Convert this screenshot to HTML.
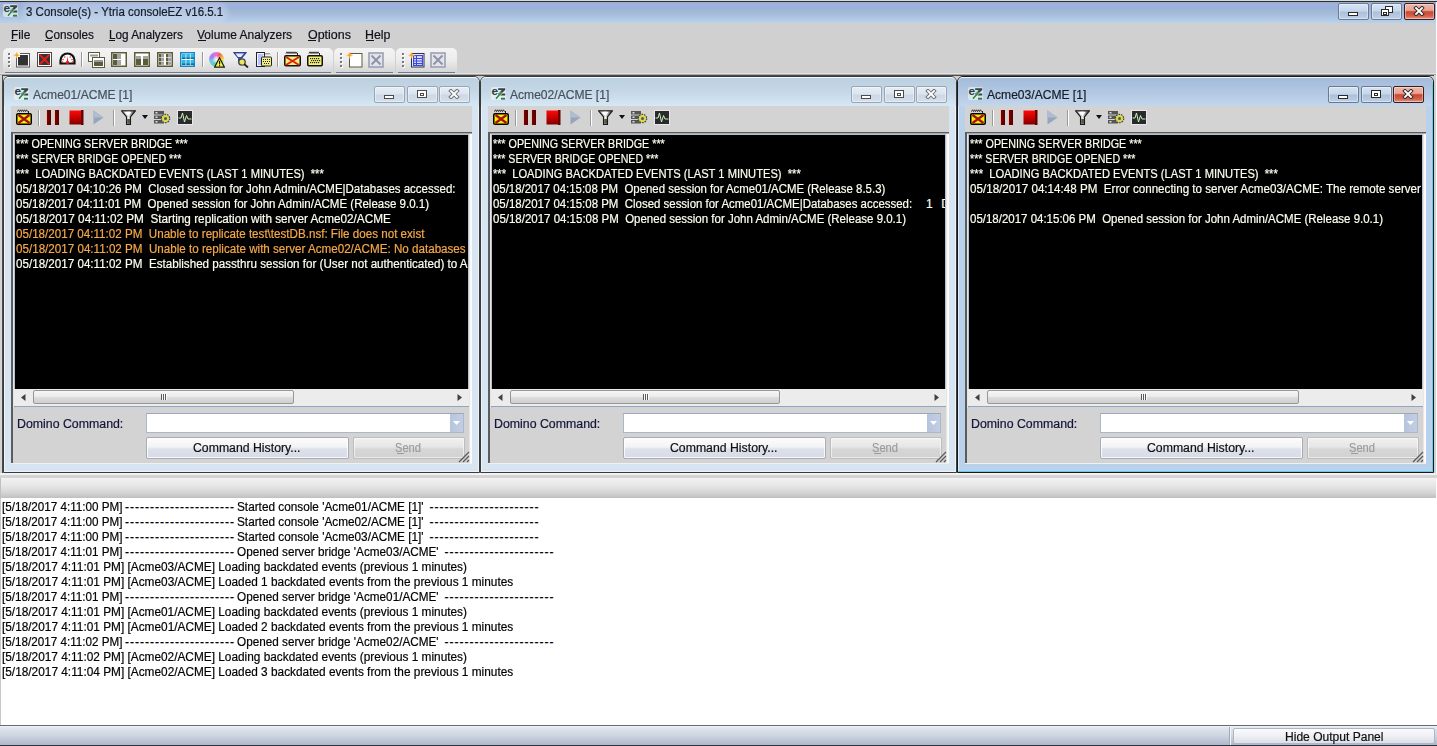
<!DOCTYPE html>
<html><head><meta charset="utf-8"><title>consoleEZ</title><style>
*{margin:0;padding:0;box-sizing:border-box}
html,body{width:1437px;height:746px;overflow:hidden;background:#d0d0d0;font-family:"Liberation Sans",sans-serif;font-size:12px;position:relative}
.a{position:absolute;display:block}
.t{position:absolute;white-space:pre;transform-origin:0 0;-webkit-text-stroke:0.2px currentColor}
</style></head><body>
<div class="a" style="left:0px;top:0px;width:1437px;height:1px;background:#d8dcd8"></div>
<div class="a" style="left:0px;top:1px;width:1437px;height:1px;background:#283038"></div>
<div class="a" style="left:0px;top:2px;width:1437px;height:21px;background:linear-gradient(#9aa8c8 0px,#a2b2de 2px,#9ab2da 6px,#a2bad4 10px,#abc0e0 14px,#b2cbe8 18px,#b8d2ec 21px)"></div>
<div class="a" style="left:22px;top:3px;width:206px;height:19px;background:rgba(235,242,250,.28);border-radius:9px;filter:blur(2.5px)"></div>
<svg class="a" style="left:3px;top:4px;" width="15" height="13" viewBox="0 0 15 13"><rect x="0" y="0" width="15" height="13" rx="2" fill="#f4f8fa" opacity=".55"/>
<text x="0.5" y="8.2" font-family="Liberation Sans" font-weight="bold" font-size="10" fill="#2e3c3c" textLength="6.6" lengthAdjust="spacingAndGlyphs">e</text>
<path d="M7.2 1.2H14.2V3.1L10.4 6.5H14.2V8.4H7V6.5L10.8 3.1H7.2z" fill="#364545"/>
<path d="M5 11.8l5.5-6.5" stroke="#fff" stroke-width="3" opacity=".6"/>
<path d="M5 11.8l5.5-6.5" stroke="#2e8a3c" stroke-width="1.7"/>
<rect x="10" y="10.8" width="4" height="1.8" fill="#2a7a3a"/></svg>
<div class="t" style="left:25.5px;top:5.0px;font-size:12px;line-height:15px;color:#141c2c;transform:scaleX(0.9579);">3 Console(s) - Ytria consoleEZ v16.5.1</div>
<div class="a" style="left:1338px;top:3px;width:31px;height:17px;background:linear-gradient(#d6e3f2 0%,#c6d7ec 45%,#acc0da 55%,#bed1e8 100%);border:1px solid #6a7a90;border-radius:2px;box-shadow:inset 0 0 0 1px rgba(255,255,255,.4)"></div>
<div class="a" style="left:1348px;top:12px;width:10px;height:4px;background:#fff;border:1px solid #2a2a2a"></div>
<div class="a" style="left:1371px;top:3px;width:31px;height:17px;background:linear-gradient(#d6e3f2 0%,#c6d7ec 45%,#acc0da 55%,#bed1e8 100%);border:1px solid #6a7a90;border-radius:2px;box-shadow:inset 0 0 0 1px rgba(255,255,255,.4)"></div>
<div class="a" style="left:1385px;top:6px;width:8px;height:7px;background:#fff;border:1px solid #2a2a2a"></div>
<div class="a" style="left:1381px;top:9px;width:8px;height:7px;background:#fff;border:1px solid #2a2a2a"></div>
<div class="a" style="left:1383px;top:12px;width:4px;height:3px;background:#fff;border:1px solid #2a2a2a"></div>
<div class="a" style="left:1404px;top:3px;width:31px;height:17px;background:linear-gradient(#efb6aa 0%,#e8a494 42%,#cc4630 52%,#d4604a 80%,#e6988a 100%);border:1px solid #3c1c18;border-radius:2px;box-shadow:inset 0 0 0 1px rgba(255,255,255,.4)"></div>
<svg class="a" style="left:1413px;top:6px;" width="12" height="10" viewBox="0 0 12 10"><path d="M3 2l6 6M9 2l-6 6" stroke="#2a2a2a" stroke-width="3.8" stroke-linecap="square"/><path d="M3 2l6 6M9 2l-6 6" stroke="#fff" stroke-width="1.9" stroke-linecap="square"/></svg>
<div class="a" style="left:0px;top:23px;width:1437px;height:25px;background:#d0d0d0"></div>
<div class="t" style="left:10.8px;top:28.3px;font-size:12px;line-height:15px;color:#10101c;transform:scaleX(0.9977);">File</div>
<div class="a" style="left:11px;top:40px;width:6px;height:1px;background:#10101c"></div>
<div class="t" style="left:44.9px;top:28.3px;font-size:12px;line-height:15px;color:#10101c;transform:scaleX(0.9794);">Consoles</div>
<div class="a" style="left:45px;top:40px;width:7px;height:1px;background:#10101c"></div>
<div class="t" style="left:109.0px;top:28.3px;font-size:12px;line-height:15px;color:#10101c;transform:scaleX(0.9802);">Log Analyzers</div>
<div class="a" style="left:109px;top:40px;width:6px;height:1px;background:#10101c"></div>
<div class="t" style="left:197.4px;top:28.3px;font-size:12px;line-height:15px;color:#10101c;transform:scaleX(0.9970);">Volume Analyzers</div>
<div class="a" style="left:198px;top:40px;width:8px;height:1px;background:#10101c"></div>
<div class="t" style="left:307.7px;top:28.3px;font-size:12px;line-height:15px;color:#10101c;transform:scaleX(1.0372);">Options</div>
<div class="a" style="left:308px;top:40px;width:8px;height:1px;background:#10101c"></div>
<div class="t" style="left:365.4px;top:28.3px;font-size:12px;line-height:15px;color:#10101c;transform:scaleX(1.0329);">Help</div>
<div class="a" style="left:366px;top:40px;width:8px;height:1px;background:#10101c"></div>
<div class="a" style="left:3px;top:48px;width:330px;height:24px;background:linear-gradient(#f4f4f4 0%,#ececec 50%,#d6d6d6 100%);border-radius:5px 5px 0 0"></div>
<div class="a" style="left:5px;top:72px;width:326px;height:1px;background:#6a7b95"></div>
<div class="a" style="left:334px;top:48px;width:61px;height:24px;background:linear-gradient(#f4f4f4 0%,#ececec 50%,#d6d6d6 100%);border-radius:5px 5px 0 0"></div>
<div class="a" style="left:336px;top:72px;width:57px;height:1px;background:#6a7b95"></div>
<div class="a" style="left:396px;top:48px;width:61px;height:24px;background:linear-gradient(#f4f4f4 0%,#ececec 50%,#d6d6d6 100%);border-radius:5px 5px 0 0"></div>
<div class="a" style="left:398px;top:72px;width:57px;height:1px;background:#6a7b95"></div>
<div class="a" style="left:0px;top:73px;width:1437px;height:1px;background:#e2e2e2"></div>
<div class="a" style="left:8px;top:53px;width:2px;height:2px;background:#7a7a7a;box-shadow:1px 1px 0 #fff"></div>
<div class="a" style="left:8px;top:57px;width:2px;height:2px;background:#7a7a7a;box-shadow:1px 1px 0 #fff"></div>
<div class="a" style="left:8px;top:61px;width:2px;height:2px;background:#7a7a7a;box-shadow:1px 1px 0 #fff"></div>
<div class="a" style="left:8px;top:65px;width:2px;height:2px;background:#7a7a7a;box-shadow:1px 1px 0 #fff"></div>
<div class="a" style="left:340px;top:53px;width:2px;height:2px;background:#7a7a7a;box-shadow:1px 1px 0 #fff"></div>
<div class="a" style="left:340px;top:57px;width:2px;height:2px;background:#7a7a7a;box-shadow:1px 1px 0 #fff"></div>
<div class="a" style="left:340px;top:61px;width:2px;height:2px;background:#7a7a7a;box-shadow:1px 1px 0 #fff"></div>
<div class="a" style="left:340px;top:65px;width:2px;height:2px;background:#7a7a7a;box-shadow:1px 1px 0 #fff"></div>
<div class="a" style="left:402px;top:53px;width:2px;height:2px;background:#7a7a7a;box-shadow:1px 1px 0 #fff"></div>
<div class="a" style="left:402px;top:57px;width:2px;height:2px;background:#7a7a7a;box-shadow:1px 1px 0 #fff"></div>
<div class="a" style="left:402px;top:61px;width:2px;height:2px;background:#7a7a7a;box-shadow:1px 1px 0 #fff"></div>
<div class="a" style="left:402px;top:65px;width:2px;height:2px;background:#7a7a7a;box-shadow:1px 1px 0 #fff"></div>
<svg class="a" style="left:13px;top:51px;" width="18" height="17" viewBox="0 0 18 17"><rect x="3.5" y="2.5" width="13" height="13.5" fill="#fff" stroke="#5a5a5a"/><rect x="5" y="4" width="10" height="10.5" fill="#333"/><rect x="3" y="2" width="4" height="4" fill="#fff"/><path d="M3.8 1.0L4.7 3.3000000000000003L7.0 4.2L4.7 5.1000000000000005L3.8 7.4L2.9 5.1000000000000005L0.5999999999999996 4.2L2.9 3.3000000000000003z" fill="#f7a01a" stroke="#ffd070" stroke-width=".4"/></svg>
<svg class="a" style="left:37px;top:52px;" width="15" height="15" viewBox="0 0 15 15"><rect x=".5" y=".5" width="14" height="14" fill="#fff" stroke="#4a4a4a"/><rect x="2" y="2" width="11" height="11" fill="#333"/><path d="M2.5 2.5l10 10M12.5 2.5l-10 10" stroke="#e41c1c" stroke-width="1.8"/></svg>
<svg class="a" style="left:59px;top:52px;" width="17" height="13" viewBox="0 0 17 13"><path d="M1.5 11.5V8.5A7 7 0 0 1 15.5 8.5V11.5z" fill="#fff" stroke="#111" stroke-width="2.2"/><path d="M7.6 11L8.5 4L9.4 11z" fill="#e01818"/><circle cx="8.5" cy="10.4" r="1.6" fill="#e01818"/><circle cx="4" cy="7.5" r=".75" fill="#d22"/><circle cx="5.8" cy="5" r=".75" fill="#d22"/><circle cx="11.2" cy="5" r=".75" fill="#d22"/><circle cx="13" cy="7.5" r=".75" fill="#d22"/><circle cx="3.6" cy="10" r=".7" fill="#d22"/><circle cx="13.4" cy="10" r=".7" fill="#d22"/></svg>
<div class="a" style="left:81px;top:52px;width:1px;height:15px;background:#9a9a9a;box-shadow:1px 0 0 #fff"></div>
<svg class="a" style="left:88px;top:52px;" width="17" height="16" viewBox="0 0 17 16"><rect x=".5" y=".5" width="11" height="9" fill="#fff" stroke="#5c5c3a"/><rect x="2" y="2.5" width="8" height="2" fill="#9a9a9a"/><rect x="4.5" y="5.5" width="12" height="10" fill="#fff" stroke="#5c5c3a"/><rect x="6" y="8" width="9" height="2" fill="#9c9c9c"/><rect x="6" y="10" width="9" height="4" fill="#5c5c3a"/></svg>
<svg class="a" style="left:111px;top:52px;" width="16" height="15" viewBox="0 0 16 15"><rect x=".75" y=".75" width="14.5" height="13.5" fill="#fff" stroke="#5c5c3a" stroke-width="1.5"/><rect x="2" y="2" width="4.5" height="5" fill="#5c5c3a"/><rect x="6.5" y="2" width="3.5" height="5" fill="#a4a4a4"/><rect x="2" y="8" width="4.5" height="5" fill="#5c5c3a"/><rect x="6.5" y="8" width="3.5" height="5" fill="#a4a4a4"/></svg>
<svg class="a" style="left:134px;top:52px;" width="16" height="15" viewBox="0 0 16 15"><rect x=".75" y=".75" width="14.5" height="13.5" fill="#fff" stroke="#5c5c3a" stroke-width="1.5"/><rect x="2" y="4" width="5" height="3" fill="#a4a4a4"/><rect x="2" y="7" width="5" height="6" fill="#5c5c3a"/><rect x="9" y="4" width="5" height="3" fill="#a4a4a4"/><rect x="9" y="7" width="5" height="6" fill="#5c5c3a"/></svg>
<svg class="a" style="left:157px;top:52px;" width="16" height="15" viewBox="0 0 16 15"><rect x=".75" y=".75" width="14.5" height="13.5" fill="#fff" stroke="#5c5c3a" stroke-width="1.5"/><rect x="2" y="2" width="2.5" height="3.2" fill="#5c5c3a"/><rect x="4.5" y="2" width="2.5" height="3.2" fill="#a0a0a0"/><rect x="2" y="5.8" width="2.5" height="3.2" fill="#5c5c3a"/><rect x="4.5" y="5.8" width="2.5" height="3.2" fill="#a0a0a0"/><rect x="2" y="9.6" width="2.5" height="3.2" fill="#5c5c3a"/><rect x="4.5" y="9.6" width="2.5" height="3.2" fill="#a0a0a0"/><rect x="9" y="2" width="2.5" height="3.2" fill="#5c5c3a"/><rect x="11.5" y="2" width="2.5" height="3.2" fill="#a0a0a0"/><rect x="9" y="5.8" width="2.5" height="3.2" fill="#5c5c3a"/><rect x="11.5" y="5.8" width="2.5" height="3.2" fill="#a0a0a0"/><rect x="9" y="9.6" width="2.5" height="3.2" fill="#5c5c3a"/><rect x="11.5" y="9.6" width="2.5" height="3.2" fill="#a0a0a0"/></svg>
<svg class="a" style="left:180px;top:52px;" width="15" height="15" viewBox="0 0 15 15"><rect x=".75" y=".75" width="13.5" height="13.5" fill="#fff" stroke="#1a86c0" stroke-width="1.5"/><rect x="2" y="2" width="3.6" height="3.2" fill="#2ab8f0"/><rect x="2" y="5.2" width="3.6" height="1.8" fill="#0a70a0"/><rect x="2" y="8" width="3.6" height="3.2" fill="#2ab8f0"/><rect x="2" y="11.2" width="3.6" height="1.8" fill="#0a70a0"/><rect x="6.3" y="2" width="3.6" height="3.2" fill="#2ab8f0"/><rect x="6.3" y="5.2" width="3.6" height="1.8" fill="#0a70a0"/><rect x="6.3" y="8" width="3.6" height="3.2" fill="#2ab8f0"/><rect x="6.3" y="11.2" width="3.6" height="1.8" fill="#0a70a0"/><rect x="10.6" y="2" width="3.6" height="3.2" fill="#2ab8f0"/><rect x="10.6" y="5.2" width="3.6" height="1.8" fill="#0a70a0"/><rect x="10.6" y="8" width="3.6" height="3.2" fill="#2ab8f0"/><rect x="10.6" y="11.2" width="3.6" height="1.8" fill="#0a70a0"/></svg>
<div class="a" style="left:202px;top:52px;width:1px;height:15px;background:#9a9a9a;box-shadow:1px 0 0 #fff"></div>
<div class="a" style="left:209px;top:52px;width:15px;height:15px;border-radius:50%;background:conic-gradient(from 0deg,#f070d0,#f06060,#f0a040 60deg,#f0e060 90deg,#80e060 150deg,#60d0a0 200deg,#70c8f0 250deg,#a080f0 300deg,#f070d0)"></div>
<div class="a" style="left:213px;top:56px;width:7px;height:7px;border-radius:50%;background:radial-gradient(#ffffff,rgba(255,255,255,0))"></div>
<svg class="a" style="left:214px;top:57px;" width="11" height="11" viewBox="0 0 11 11"><path d="M5.5 .8L10.4 10.2H.6z" fill="#f4f040" stroke="#1a1a1a" stroke-width="1.2"/><rect x="5" y="3.8" width="1.1" height="3.6" fill="#111"/><rect x="5" y="8.2" width="1.1" height="1.1" fill="#111"/></svg>
<svg class="a" style="left:233px;top:52px;" width="16" height="16" viewBox="0 0 16 16"><path d="M.5 .5H13.5L8.5 6.5V9L5.5 11V6.5z" fill="#3a4ab8" stroke="#202a7a" stroke-width=".8"/><path d="M2.5 1.5H11L8 5H5z" fill="#e8ecff"/><circle cx="9" cy="10" r="3.2" fill="#e8e860" stroke="#444" stroke-width="1.3"/><path d="M11.3 12.3L15 15.5" stroke="#222" stroke-width="1.8"/></svg>
<svg class="a" style="left:256px;top:52px;" width="16" height="16" viewBox="0 0 16 16"><rect x=".5" y=".5" width="8" height="14" fill="#f2f2ff" stroke="#223" stroke-width="1"/><rect x="2" y="2" width="5" height="11" fill="#b8c0ff"/><path d="M8 2.3l1 -1l1 1l1 -1l1 1l1 -1l1 1" stroke="#333" stroke-width=".7" fill="none"/><rect x="5.5" y="5" width="10" height="9" rx="1" fill="#f0f080" stroke="#222"/><g fill="#222"><rect x="7" y="7" width="1" height="1"/><rect x="9" y="7" width="1" height="1"/><rect x="11" y="7" width="1" height="1"/><rect x="13" y="7" width="1" height="1"/><rect x="7" y="9" width="1" height="1"/><rect x="9" y="9" width="1" height="1"/><rect x="11" y="9" width="1" height="1"/><rect x="13" y="9" width="1" height="1"/><rect x="8" y="11" width="1" height="1"/><rect x="10" y="11" width="1" height="1"/><rect x="12" y="11" width="1" height="1"/></g></svg>
<div class="a" style="left:277px;top:52px;width:1px;height:15px;background:#9a9a9a;box-shadow:1px 0 0 #fff"></div>
<svg class="a" style="left:284px;top:51px;" width="17" height="16" viewBox="0 0 17 16"><polyline points="2,2.6 3,0.8 4,2.6 5,0.8 6,2.6 7,0.8 8,2.6 9,0.8 10,2.6 11,0.8 12,2.6 13,0.8" stroke="#222" stroke-width=".9" fill="none"/><rect x="13" y="2" width="1" height="3" fill="#222"/><rect x=".75" y="4.75" width="15.5" height="10" rx="1.2" fill="#f4f470" stroke="#111" stroke-width="1.5"/><path d="M2 6l13 8M15 6l-13 8" stroke="#e01c1c" stroke-width="2"/></svg>
<svg class="a" style="left:307px;top:51px;" width="16" height="16" viewBox="0 0 16 16"><polyline points="2,2.6 3,0.8 4,2.6 5,0.8 6,2.6 7,0.8 8,2.6 9,0.8 10,2.6 11,0.8 12,2.6" stroke="#222" stroke-width=".9" fill="none"/><rect x="12" y="2" width="1" height="3" fill="#222"/><rect x=".75" y="4.75" width="14.5" height="10" rx="1.2" fill="#f4f470" stroke="#111" stroke-width="1.5"/><g fill="#222"><rect x="3" y="7" width="1.2" height="1.2"/><rect x="5" y="7" width="1.2" height="1.2"/><rect x="7" y="7" width="1.2" height="1.2"/><rect x="9" y="7" width="1.2" height="1.2"/><rect x="11" y="7" width="1.2" height="1.2"/><rect x="4" y="9" width="1.2" height="1.2"/><rect x="6" y="9" width="1.2" height="1.2"/><rect x="8" y="9" width="1.2" height="1.2"/><rect x="10" y="9" width="1.2" height="1.2"/><rect x="12" y="9" width="1.2" height="1.2"/><rect x="3" y="11" width="1.2" height="1.2"/><rect x="5" y="11" width="1.2" height="1.2"/><rect x="7" y="11" width="1.2" height="1.2"/><rect x="9" y="11" width="1.2" height="1.2"/><rect x="11" y="11" width="1.2" height="1.2"/></g></svg>
<svg class="a" style="left:346px;top:51px;" width="17" height="17" viewBox="0 0 17 17"><rect x="3.5" y="2.5" width="12.5" height="13.5" fill="#fff" stroke="#5c5c3a"/><rect x="2" y="1" width="4" height="4" fill="none"/><path d="M3.6 1.0L4.5 3.3000000000000003L6.800000000000001 4.2L4.5 5.1000000000000005L3.6 7.4L2.7 5.1000000000000005L0.3999999999999999 4.2L2.7 3.3000000000000003z" fill="#f7a01a" stroke="#ffd070" stroke-width=".4"/></svg>
<svg class="a" style="left:368px;top:52px;" width="16" height="16" viewBox="0 0 16 16"><rect x="1" y="1" width="14" height="14" fill="#e4e4e8" stroke="#9aa0b4" stroke-width="1.6"/><path d="M3.5 3.5l9 9M12.5 3.5l-9 9" stroke="#8a90a8" stroke-width="1.8"/></svg>
<svg class="a" style="left:408px;top:51px;" width="17" height="17" viewBox="0 0 17 17"><rect x="3.5" y="2.5" width="12.5" height="13.5" fill="#fff" stroke="#333"/><rect x="5.5" y="4.5" width="9" height="10" fill="#dde" stroke="#3848e8" stroke-width="1.2"/><path d="M6 7.5h8M6 10h8M6 12.5h8M8.5 5v9" stroke="#3848e8" stroke-width="1"/><path d="M3.6 1.0L4.5 3.3000000000000003L6.800000000000001 4.2L4.5 5.1000000000000005L3.6 7.4L2.7 5.1000000000000005L0.3999999999999999 4.2L2.7 3.3000000000000003z" fill="#f7a01a" stroke="#ffd070" stroke-width=".4"/></svg>
<svg class="a" style="left:430px;top:52px;" width="16" height="16" viewBox="0 0 16 16"><rect x="1" y="1" width="14" height="14" fill="#e4e4e8" stroke="#9aa0b4" stroke-width="1.6"/><path d="M3.5 3.5l9 9M12.5 3.5l-9 9" stroke="#8a90a8" stroke-width="1.8"/></svg>
<div class="a" style="left:0px;top:74px;width:1437px;height:1px;background:#a8a8a8"></div>
<div class="a" style="left:0px;top:75px;width:1437px;height:1px;background:#4a4a4a"></div>
<div class="a" style="left:0px;top:75px;width:2px;height:400px;background:#d4d4d4"></div>
<div class="a" style="left:2px;top:75px;width:1px;height:400px;background:#4a4a4a"></div>
<div class="a" style="left:3px;top:76px;width:477px;height:397px;background:#d7e4f2;border:1px solid #3c3c3c;border-radius:6px 6px 0 0;box-shadow:inset 0 0 0 1px rgba(255,255,255,.55)"></div>
<div class="a" style="left:4px;top:77px;width:475px;height:29px;background:linear-gradient(#bbd0e0 0%,#c6d8e8 50%,#d6e7f5 100%);border-radius:5px 5px 0 0;border-top:1px solid rgba(255,255,255,.7)"></div>
<svg class="a" style="left:14px;top:87px;" width="15" height="13" viewBox="0 0 15 13"><rect x="0" y="0" width="15" height="13" rx="2" fill="#f4f8fa" opacity=".55"/>
<text x="0.5" y="8.2" font-family="Liberation Sans" font-weight="bold" font-size="10" fill="#2e3c3c" textLength="6.6" lengthAdjust="spacingAndGlyphs">e</text>
<path d="M7.2 1.2H14.2V3.1L10.4 6.5H14.2V8.4H7V6.5L10.8 3.1H7.2z" fill="#364545"/>
<path d="M5 11.8l5.5-6.5" stroke="#fff" stroke-width="3" opacity=".6"/>
<path d="M5 11.8l5.5-6.5" stroke="#2e8a3c" stroke-width="1.7"/>
<rect x="10" y="10.8" width="4" height="1.8" fill="#2a7a3a"/></svg>
<div class="t" style="left:32.5px;top:87.9px;font-size:12px;line-height:15px;color:#46505a;transform:scaleX(1.0060);">Acme01/ACME [1]</div>
<div class="a" style="left:374px;top:86px;width:31px;height:17px;background:linear-gradient(#e6edf4 0%,#dce5ef 45%,#ccd8e6 55%,#d6e0ec 100%);border:1px solid #9aa6b6;border-radius:2px;box-shadow:inset 0 0 0 1px rgba(255,255,255,.4)"></div>
<div class="a" style="left:384px;top:95px;width:10px;height:4px;background:#fff;border:1px solid #4a4a4a"></div>
<div class="a" style="left:407px;top:86px;width:31px;height:17px;background:linear-gradient(#e6edf4 0%,#dce5ef 45%,#ccd8e6 55%,#d6e0ec 100%);border:1px solid #9aa6b6;border-radius:2px;box-shadow:inset 0 0 0 1px rgba(255,255,255,.4)"></div>
<div class="a" style="left:417px;top:90px;width:10px;height:8px;background:#fff;border:1px solid #4a4a4a"></div>
<div class="a" style="left:420px;top:93px;width:4px;height:3px;background:#fff;border:1px solid #4a4a4a"></div>
<div class="a" style="left:439px;top:86px;width:31px;height:17px;background:linear-gradient(#e6edf4 0%,#dce5ef 45%,#ccd8e6 55%,#d6e0ec 100%);border:1px solid #9aa6b6;border-radius:2px;box-shadow:inset 0 0 0 1px rgba(255,255,255,.4)"></div>
<svg class="a" style="left:448px;top:89px;" width="12" height="10" viewBox="0 0 12 10"><path d="M3 2l6 6M9 2l-6 6" stroke="#6a6e74" stroke-width="3.8" stroke-linecap="square"/><path d="M3 2l6 6M9 2l-6 6" stroke="#fff" stroke-width="1.9" stroke-linecap="square"/></svg>
<div class="a" style="left:11px;top:106px;width:461px;height:357px;background:#d3d3d3"></div>
<div class="a" style="left:11px;top:416px;width:1px;height:43px;"></div>
<svg class="a" style="left:16px;top:109px;" width="16" height="16" viewBox="0 0 16 16"><polyline points="1.5,2.6 2.5,0.8 3.5,2.6 4.5,0.8 5.5,2.6 6.5,0.8 7.5,2.6 8.5,0.8 9.5,2.6 10.5,0.8 11.5,2.6" stroke="#222" stroke-width=".9" fill="none"/><rect x="12" y="2" width="1" height="3" fill="#222"/><rect x=".75" y="4.75" width="14.5" height="10.5" rx="1.3" fill="#f8f000" stroke="#000" stroke-width="1.5"/><g fill="#c8c000" opacity=".7"><rect x="3" y="7" width="1" height="1"/><rect x="12" y="7" width="1" height="1"/><rect x="3" y="12" width="1" height="1"/><rect x="12" y="12" width="1" height="1"/></g><path d="M2.5 6l11 8M13.5 6l-11 8" stroke="#a81010" stroke-width="2.2"/></svg>
<div class="a" style="left:38px;top:110px;width:1px;height:16px;background:#9a9a9a;box-shadow:1px 0 0 #fff"></div>
<svg class="a" style="left:46px;top:110px;" width="14" height="15" viewBox="0 0 14 15"><defs><linearGradient id="pz" x1="0" y1="0" x2="1" y2="0"><stop offset="0" stop-color="#ffb080"/><stop offset=".15" stop-color="#7a0000"/><stop offset="1" stop-color="#5a0000"/></linearGradient></defs><rect x=".5" y="0" width="4.5" height="15" fill="url(#pz)"/><rect x="8.5" y="0" width="4.5" height="15" fill="url(#pz)"/></svg>
<svg class="a" style="left:69px;top:110px;" width="15" height="15" viewBox="0 0 15 15"><defs><linearGradient id="st" x1="0" y1="0" x2="0" y2="1"><stop offset="0" stop-color="#ff0a0a"/><stop offset=".5" stop-color="#c80000"/><stop offset="1" stop-color="#800000"/></linearGradient></defs><rect x=".5" y=".5" width="13.5" height="14" fill="url(#st)"/><rect x="12" y="0" width="2.5" height="15" fill="#6a0000"/></svg>
<svg class="a" style="left:93px;top:110px;" width="11" height="15" viewBox="0 0 11 15"><path d="M.5 .5L10.5 7.5L.5 14.5z" fill="#97a4bc"/><path d="M.5 .5L10.5 7.5L.5 7.5z" fill="#b0bcd0"/></svg>
<div class="a" style="left:113px;top:110px;width:1px;height:16px;background:#9a9a9a;box-shadow:1px 0 0 #fff"></div>
<svg class="a" style="left:121px;top:110px;" width="15" height="15" viewBox="0 0 15 15"><defs><linearGradient id="fl" x1="0" y1="0" x2="1" y2="0"><stop offset="0" stop-color="#707070"/><stop offset=".5" stop-color="#e8e8e8"/><stop offset="1" stop-color="#202030"/></linearGradient></defs><path d="M.5 .8H14.5L9.5 6.8V14.5H5.5V6.8z" fill="url(#fl)" stroke="#1a1a1a" stroke-width="1.1"/><path d="M3.2 2H10.5L8.2 5H6z" fill="#fff"/><rect x="6.2" y="9" width="2.8" height="4.8" fill="#505a40"/></svg>
<svg class="a" style="left:142px;top:115px;" width="6" height="4" viewBox="0 0 6 4"><path d="M0 0H6L3 4z" fill="#111"/></svg>
<svg class="a" style="left:154px;top:110px;" width="17" height="15" viewBox="0 0 17 15"><rect x="0" y="1" width="10" height="3.5" fill="#555"/><rect x="0" y="5.5" width="10" height="3.5" fill="#555"/><rect x="0" y="10" width="10" height="3.5" fill="#555"/><rect x="1.5" y="2" width="2" height="1.5" fill="#ddd"/><rect x="1.5" y="6.5" width="2" height="1.5" fill="#ddd"/><rect x="1.5" y="11" width="2" height="1.5" fill="#ddd"/><circle cx="11.5" cy="8.5" r="4.2" fill="#d8d850" stroke="#444" stroke-width="1.2" stroke-dasharray="1.6 1"/><circle cx="11.5" cy="8.5" r="1.5" fill="#555"/></svg>
<svg class="a" style="left:177px;top:110px;" width="16" height="15" viewBox="0 0 16 15"><rect x=".5" y=".5" width="15" height="14" fill="#2a2a2a" stroke="#e8e8f4"/><path d="M1.5 8H4L5.5 3L7.5 12L9.5 5.5L11 9H14.5" stroke="#c8f0c0" stroke-width="1" fill="none"/></svg>
<div class="a" style="left:11px;top:132px;width:461px;height:1px;background:#5c5c5c"></div>
<div class="a" style="left:11px;top:133px;width:461px;height:1px;background:#a8a8a8"></div>
<div class="a" style="left:11px;top:132px;width:2px;height:331px;background:#5c5c5c"></div>
<div class="a" style="left:13px;top:134px;width:1px;height:274px;background:#e4e4e4"></div>
<div class="a" style="left:14px;top:135px;width:1px;height:273px;background:#b4c2d6"></div>
<div class="a" style="left:14px;top:134px;width:455px;height:1px;background:#b4c2d6"></div>
<div class="a" style="left:468px;top:135px;width:1px;height:255px;background:#b4c2d6"></div>
<div class="a" style="left:469px;top:134px;width:3px;height:329px;background:linear-gradient(90deg,#dcd8d8,#f8f8f8 40%,#fdfdfd)"></div>
<div class="a" style="left:11px;top:463px;width:461px;height:1px;background:#f0f0f0"></div>
<div class="a" style="left:15px;top:135px;width:453px;height:254px;background:#000;overflow:hidden">
<div class="t" style="left:1.0px;top:1.8px;font-size:12px;line-height:15px;color:#fffff0;transform:scaleX(0.8955);">*** OPENING SERVER BRIDGE ***</div>
<div class="t" style="left:1.0px;top:16.8px;font-size:12px;line-height:15px;color:#fffff0;transform:scaleX(0.8837);">*** SERVER BRIDGE OPENED ***</div>
<div class="t" style="left:1.0px;top:31.8px;font-size:12px;line-height:15px;color:#fffff0;transform:scaleX(0.9300);">***  LOADING BACKDATED EVENTS (LAST 1 MINUTES)  ***</div>
<div class="t" style="left:1.0px;top:46.8px;font-size:12px;line-height:15px;color:#fffff0;transform:scaleX(0.9581);">05/18/2017 04:10:26 PM  Closed session for John Admin/ACME|Databases accessed:</div>
<div class="t" style="left:1.0px;top:61.8px;font-size:12px;line-height:15px;color:#fffff0;transform:scaleX(0.9589);">05/18/2017 04:11:01 PM  Opened session for John Admin/ACME (Release 9.0.1)</div>
<div class="t" style="left:1.0px;top:76.8px;font-size:12px;line-height:15px;color:#fffff0;transform:scaleX(0.9795);">05/18/2017 04:11:02 PM  Starting replication with server Acme02/ACME</div>
<div class="t" style="left:1.0px;top:91.8px;font-size:12px;line-height:15px;color:#f6a848;transform:scaleX(0.9679);">05/18/2017 04:11:02 PM  Unable to replicate test\testDB.nsf: File does not exist</div>
<div class="t" style="left:1.0px;top:106.8px;font-size:12px;line-height:15px;color:#f6a848;transform:scaleX(0.9690);">05/18/2017 04:11:02 PM  Unable to replicate with server Acme02/ACME: No databases to replicate</div>
<div class="t" style="left:1.0px;top:121.8px;font-size:12px;line-height:15px;color:#fffff0;transform:scaleX(0.9690);">05/18/2017 04:11:02 PM  Established passthru session for (User not authenticated) to Acme02/ACME</div>
</div>
<div class="a" style="left:14px;top:389px;width:455px;height:18px;background:#ececec;border-bottom:1px solid #8ea6c6"></div>
<svg class="a" style="left:21px;top:394px;" width="5" height="7" viewBox="0 0 5 7"><path d="M4.5 0V7L0 3.5z" fill="#404040"/></svg>
<svg class="a" style="left:457px;top:394px;" width="5" height="7" viewBox="0 0 5 7"><path d="M.5 0V7L5 3.5z" fill="#404040"/></svg>
<div class="a" style="left:33px;top:390px;width:261px;height:14px;background:linear-gradient(#f6f6f6 0%,#ececec 45%,#dcdcdc 55%,#cfcfcf 100%);border:1px solid #979797;border-radius:2px"></div>
<div class="a" style="left:161px;top:394px;width:1px;height:6px;background:#5a5a5a;box-shadow:1px 0 0 #fafafa"></div>
<div class="a" style="left:163px;top:394px;width:1px;height:6px;background:#5a5a5a;box-shadow:1px 0 0 #fafafa"></div>
<div class="a" style="left:165px;top:394px;width:1px;height:6px;background:#5a5a5a;box-shadow:1px 0 0 #fafafa"></div>
<div class="t" style="left:17.4px;top:417.3px;font-size:12px;line-height:15px;color:#14143c;transform:scaleX(1.0283);">Domino Command:</div>
<div class="a" style="left:146px;top:413px;width:318px;height:20px;background:#fff;border:1px solid #abb8cc;border-top-color:#9aa8bc"></div>
<div class="a" style="left:450px;top:414px;width:13px;height:18px;background:linear-gradient(90deg,#b6c4dd,#c2cee4)"></div>
<svg class="a" style="left:453px;top:421px;" width="7" height="4" viewBox="0 0 7 4"><path d="M0 0H7L3.5 4z" fill="#fff"/></svg>
<div class="a" style="left:146px;top:437px;width:203px;height:22px;background:linear-gradient(#fdfdfe 0%,#f2f3f6 45%,#dde1ea 55%,#d6dbe6 100%);border:1px solid #a8acb4;border-radius:2px;box-shadow:inset 0 0 0 1px rgba(255,255,255,.8)"></div>
<div class="t" style="left:192.8px;top:441.1px;font-size:12px;line-height:15px;color:#101010;transform:scaleX(1.0224);">Command History...</div>
<div class="a" style="left:353px;top:437px;width:112px;height:22px;background:linear-gradient(#f0f0f0 0%,#e6e6e6 45%,#d6d6d6 55%,#d2d2d2 100%);border:1px solid #bdbdbd;border-radius:2px;box-shadow:inset 0 0 0 1px rgba(255,255,255,.55)"></div>
<div class="t" style="left:395.3px;top:441.1px;font-size:12px;line-height:15px;color:#9c9c9c;transform:scaleX(0.9275);">Send</div>
<div class="a" style="left:397px;top:453px;width:7px;height:1px;background:#9c9c9c"></div>
<svg class="a" style="left:457px;top:451px;" width="13" height="12" viewBox="0 0 13 12"><path d="M2 11L12 1M6 11L12 5M10 11L12 9" stroke="#5a5a5a" stroke-width="1.2"/></svg>
<div class="a" style="left:480px;top:76px;width:477px;height:397px;background:#d7e4f2;border:1px solid #3c3c3c;border-radius:6px 6px 0 0;box-shadow:inset 0 0 0 1px rgba(255,255,255,.55)"></div>
<div class="a" style="left:481px;top:77px;width:475px;height:29px;background:linear-gradient(#bbd0e0 0%,#c6d8e8 50%,#d6e7f5 100%);border-radius:5px 5px 0 0;border-top:1px solid rgba(255,255,255,.7)"></div>
<svg class="a" style="left:491px;top:87px;" width="15" height="13" viewBox="0 0 15 13"><rect x="0" y="0" width="15" height="13" rx="2" fill="#f4f8fa" opacity=".55"/>
<text x="0.5" y="8.2" font-family="Liberation Sans" font-weight="bold" font-size="10" fill="#2e3c3c" textLength="6.6" lengthAdjust="spacingAndGlyphs">e</text>
<path d="M7.2 1.2H14.2V3.1L10.4 6.5H14.2V8.4H7V6.5L10.8 3.1H7.2z" fill="#364545"/>
<path d="M5 11.8l5.5-6.5" stroke="#fff" stroke-width="3" opacity=".6"/>
<path d="M5 11.8l5.5-6.5" stroke="#2e8a3c" stroke-width="1.7"/>
<rect x="10" y="10.8" width="4" height="1.8" fill="#2a7a3a"/></svg>
<div class="t" style="left:509.5px;top:87.9px;font-size:12px;line-height:15px;color:#46505a;transform:scaleX(1.0060);">Acme02/ACME [1]</div>
<div class="a" style="left:851px;top:86px;width:31px;height:17px;background:linear-gradient(#e6edf4 0%,#dce5ef 45%,#ccd8e6 55%,#d6e0ec 100%);border:1px solid #9aa6b6;border-radius:2px;box-shadow:inset 0 0 0 1px rgba(255,255,255,.4)"></div>
<div class="a" style="left:861px;top:95px;width:10px;height:4px;background:#fff;border:1px solid #4a4a4a"></div>
<div class="a" style="left:884px;top:86px;width:31px;height:17px;background:linear-gradient(#e6edf4 0%,#dce5ef 45%,#ccd8e6 55%,#d6e0ec 100%);border:1px solid #9aa6b6;border-radius:2px;box-shadow:inset 0 0 0 1px rgba(255,255,255,.4)"></div>
<div class="a" style="left:894px;top:90px;width:10px;height:8px;background:#fff;border:1px solid #4a4a4a"></div>
<div class="a" style="left:897px;top:93px;width:4px;height:3px;background:#fff;border:1px solid #4a4a4a"></div>
<div class="a" style="left:916px;top:86px;width:31px;height:17px;background:linear-gradient(#e6edf4 0%,#dce5ef 45%,#ccd8e6 55%,#d6e0ec 100%);border:1px solid #9aa6b6;border-radius:2px;box-shadow:inset 0 0 0 1px rgba(255,255,255,.4)"></div>
<svg class="a" style="left:925px;top:89px;" width="12" height="10" viewBox="0 0 12 10"><path d="M3 2l6 6M9 2l-6 6" stroke="#6a6e74" stroke-width="3.8" stroke-linecap="square"/><path d="M3 2l6 6M9 2l-6 6" stroke="#fff" stroke-width="1.9" stroke-linecap="square"/></svg>
<div class="a" style="left:488px;top:106px;width:461px;height:357px;background:#d3d3d3"></div>
<div class="a" style="left:488px;top:416px;width:1px;height:43px;"></div>
<svg class="a" style="left:493px;top:109px;" width="16" height="16" viewBox="0 0 16 16"><polyline points="1.5,2.6 2.5,0.8 3.5,2.6 4.5,0.8 5.5,2.6 6.5,0.8 7.5,2.6 8.5,0.8 9.5,2.6 10.5,0.8 11.5,2.6" stroke="#222" stroke-width=".9" fill="none"/><rect x="12" y="2" width="1" height="3" fill="#222"/><rect x=".75" y="4.75" width="14.5" height="10.5" rx="1.3" fill="#f8f000" stroke="#000" stroke-width="1.5"/><g fill="#c8c000" opacity=".7"><rect x="3" y="7" width="1" height="1"/><rect x="12" y="7" width="1" height="1"/><rect x="3" y="12" width="1" height="1"/><rect x="12" y="12" width="1" height="1"/></g><path d="M2.5 6l11 8M13.5 6l-11 8" stroke="#a81010" stroke-width="2.2"/></svg>
<div class="a" style="left:515px;top:110px;width:1px;height:16px;background:#9a9a9a;box-shadow:1px 0 0 #fff"></div>
<svg class="a" style="left:523px;top:110px;" width="14" height="15" viewBox="0 0 14 15"><defs><linearGradient id="pz" x1="0" y1="0" x2="1" y2="0"><stop offset="0" stop-color="#ffb080"/><stop offset=".15" stop-color="#7a0000"/><stop offset="1" stop-color="#5a0000"/></linearGradient></defs><rect x=".5" y="0" width="4.5" height="15" fill="url(#pz)"/><rect x="8.5" y="0" width="4.5" height="15" fill="url(#pz)"/></svg>
<svg class="a" style="left:546px;top:110px;" width="15" height="15" viewBox="0 0 15 15"><defs><linearGradient id="st" x1="0" y1="0" x2="0" y2="1"><stop offset="0" stop-color="#ff0a0a"/><stop offset=".5" stop-color="#c80000"/><stop offset="1" stop-color="#800000"/></linearGradient></defs><rect x=".5" y=".5" width="13.5" height="14" fill="url(#st)"/><rect x="12" y="0" width="2.5" height="15" fill="#6a0000"/></svg>
<svg class="a" style="left:570px;top:110px;" width="11" height="15" viewBox="0 0 11 15"><path d="M.5 .5L10.5 7.5L.5 14.5z" fill="#97a4bc"/><path d="M.5 .5L10.5 7.5L.5 7.5z" fill="#b0bcd0"/></svg>
<div class="a" style="left:590px;top:110px;width:1px;height:16px;background:#9a9a9a;box-shadow:1px 0 0 #fff"></div>
<svg class="a" style="left:598px;top:110px;" width="15" height="15" viewBox="0 0 15 15"><defs><linearGradient id="fl" x1="0" y1="0" x2="1" y2="0"><stop offset="0" stop-color="#707070"/><stop offset=".5" stop-color="#e8e8e8"/><stop offset="1" stop-color="#202030"/></linearGradient></defs><path d="M.5 .8H14.5L9.5 6.8V14.5H5.5V6.8z" fill="url(#fl)" stroke="#1a1a1a" stroke-width="1.1"/><path d="M3.2 2H10.5L8.2 5H6z" fill="#fff"/><rect x="6.2" y="9" width="2.8" height="4.8" fill="#505a40"/></svg>
<svg class="a" style="left:619px;top:115px;" width="6" height="4" viewBox="0 0 6 4"><path d="M0 0H6L3 4z" fill="#111"/></svg>
<svg class="a" style="left:631px;top:110px;" width="17" height="15" viewBox="0 0 17 15"><rect x="0" y="1" width="10" height="3.5" fill="#555"/><rect x="0" y="5.5" width="10" height="3.5" fill="#555"/><rect x="0" y="10" width="10" height="3.5" fill="#555"/><rect x="1.5" y="2" width="2" height="1.5" fill="#ddd"/><rect x="1.5" y="6.5" width="2" height="1.5" fill="#ddd"/><rect x="1.5" y="11" width="2" height="1.5" fill="#ddd"/><circle cx="11.5" cy="8.5" r="4.2" fill="#d8d850" stroke="#444" stroke-width="1.2" stroke-dasharray="1.6 1"/><circle cx="11.5" cy="8.5" r="1.5" fill="#555"/></svg>
<svg class="a" style="left:654px;top:110px;" width="16" height="15" viewBox="0 0 16 15"><rect x=".5" y=".5" width="15" height="14" fill="#2a2a2a" stroke="#e8e8f4"/><path d="M1.5 8H4L5.5 3L7.5 12L9.5 5.5L11 9H14.5" stroke="#c8f0c0" stroke-width="1" fill="none"/></svg>
<div class="a" style="left:488px;top:132px;width:461px;height:1px;background:#5c5c5c"></div>
<div class="a" style="left:488px;top:133px;width:461px;height:1px;background:#a8a8a8"></div>
<div class="a" style="left:488px;top:132px;width:2px;height:331px;background:#5c5c5c"></div>
<div class="a" style="left:490px;top:134px;width:1px;height:274px;background:#e4e4e4"></div>
<div class="a" style="left:491px;top:135px;width:1px;height:273px;background:#b4c2d6"></div>
<div class="a" style="left:491px;top:134px;width:455px;height:1px;background:#b4c2d6"></div>
<div class="a" style="left:945px;top:135px;width:1px;height:255px;background:#b4c2d6"></div>
<div class="a" style="left:946px;top:134px;width:3px;height:329px;background:linear-gradient(90deg,#dcd8d8,#f8f8f8 40%,#fdfdfd)"></div>
<div class="a" style="left:488px;top:463px;width:461px;height:1px;background:#f0f0f0"></div>
<div class="a" style="left:492px;top:135px;width:453px;height:254px;background:#000;overflow:hidden">
<div class="t" style="left:1.0px;top:1.8px;font-size:12px;line-height:15px;color:#fffff0;transform:scaleX(0.8955);">*** OPENING SERVER BRIDGE ***</div>
<div class="t" style="left:1.0px;top:16.8px;font-size:12px;line-height:15px;color:#fffff0;transform:scaleX(0.8837);">*** SERVER BRIDGE OPENED ***</div>
<div class="t" style="left:1.0px;top:31.8px;font-size:12px;line-height:15px;color:#fffff0;transform:scaleX(0.9300);">***  LOADING BACKDATED EVENTS (LAST 1 MINUTES)  ***</div>
<div class="t" style="left:1.0px;top:46.8px;font-size:12px;line-height:15px;color:#fffff0;transform:scaleX(0.9516);">05/18/2017 04:15:08 PM  Opened session for Acme01/ACME (Release 8.5.3)</div>
<div class="t" style="left:1.0px;top:61.8px;font-size:12px;line-height:15px;color:#fffff0;transform:scaleX(0.9539);">05/18/2017 04:15:08 PM  Closed session for Acme01/ACME|Databases accessed:</div>
<div class="t" style="left:434.1px;top:61.8px;font-size:12px;line-height:15px;color:#fffff0;">1</div>
<div class="t" style="left:449.3px;top:61.8px;font-size:12px;line-height:15px;color:#fffff0;">Documents</div>
<div class="t" style="left:1.0px;top:76.8px;font-size:12px;line-height:15px;color:#fffff0;transform:scaleX(0.9569);">05/18/2017 04:15:08 PM  Opened session for John Admin/ACME (Release 9.0.1)</div>
</div>
<div class="a" style="left:491px;top:389px;width:455px;height:18px;background:#ececec;border-bottom:1px solid #8ea6c6"></div>
<svg class="a" style="left:498px;top:394px;" width="5" height="7" viewBox="0 0 5 7"><path d="M4.5 0V7L0 3.5z" fill="#404040"/></svg>
<svg class="a" style="left:934px;top:394px;" width="5" height="7" viewBox="0 0 5 7"><path d="M.5 0V7L5 3.5z" fill="#404040"/></svg>
<div class="a" style="left:510px;top:390px;width:270px;height:14px;background:linear-gradient(#f6f6f6 0%,#ececec 45%,#dcdcdc 55%,#cfcfcf 100%);border:1px solid #979797;border-radius:2px"></div>
<div class="a" style="left:643px;top:394px;width:1px;height:6px;background:#5a5a5a;box-shadow:1px 0 0 #fafafa"></div>
<div class="a" style="left:645px;top:394px;width:1px;height:6px;background:#5a5a5a;box-shadow:1px 0 0 #fafafa"></div>
<div class="a" style="left:647px;top:394px;width:1px;height:6px;background:#5a5a5a;box-shadow:1px 0 0 #fafafa"></div>
<div class="t" style="left:494.4px;top:417.3px;font-size:12px;line-height:15px;color:#14143c;transform:scaleX(1.0283);">Domino Command:</div>
<div class="a" style="left:623px;top:413px;width:318px;height:20px;background:#fff;border:1px solid #abb8cc;border-top-color:#9aa8bc"></div>
<div class="a" style="left:927px;top:414px;width:13px;height:18px;background:linear-gradient(90deg,#b6c4dd,#c2cee4)"></div>
<svg class="a" style="left:930px;top:421px;" width="7" height="4" viewBox="0 0 7 4"><path d="M0 0H7L3.5 4z" fill="#fff"/></svg>
<div class="a" style="left:623px;top:437px;width:203px;height:22px;background:linear-gradient(#fdfdfe 0%,#f2f3f6 45%,#dde1ea 55%,#d6dbe6 100%);border:1px solid #a8acb4;border-radius:2px;box-shadow:inset 0 0 0 1px rgba(255,255,255,.8)"></div>
<div class="t" style="left:669.8px;top:441.1px;font-size:12px;line-height:15px;color:#101010;transform:scaleX(1.0224);">Command History...</div>
<div class="a" style="left:830px;top:437px;width:112px;height:22px;background:linear-gradient(#f0f0f0 0%,#e6e6e6 45%,#d6d6d6 55%,#d2d2d2 100%);border:1px solid #bdbdbd;border-radius:2px;box-shadow:inset 0 0 0 1px rgba(255,255,255,.55)"></div>
<div class="t" style="left:872.3px;top:441.1px;font-size:12px;line-height:15px;color:#9c9c9c;transform:scaleX(0.9275);">Send</div>
<div class="a" style="left:874px;top:453px;width:7px;height:1px;background:#9c9c9c"></div>
<svg class="a" style="left:934px;top:451px;" width="13" height="12" viewBox="0 0 13 12"><path d="M2 11L12 1M6 11L12 5M10 11L12 9" stroke="#5a5a5a" stroke-width="1.2"/></svg>
<div class="a" style="left:957px;top:76px;width:477px;height:397px;background:#b9d1ea;border:1px solid #1a1a1a;border-radius:6px 6px 0 0;box-shadow:inset 0 0 0 1px rgba(255,255,255,.55)"></div>
<div class="a" style="left:958px;top:77px;width:475px;height:29px;background:linear-gradient(#a3bbdb 0%,#b2c8e2 50%,#c2d6ec 100%);border-radius:5px 5px 0 0;border-top:1px solid rgba(255,255,255,.7)"></div>
<div class="a" style="left:1432px;top:84px;width:1px;height:388px;background:#5ad0f0"></div>
<div class="a" style="left:958px;top:471px;width:475px;height:1px;background:#5ad0f0"></div>
<svg class="a" style="left:968px;top:87px;" width="15" height="13" viewBox="0 0 15 13"><rect x="0" y="0" width="15" height="13" rx="2" fill="#f4f8fa" opacity=".55"/>
<text x="0.5" y="8.2" font-family="Liberation Sans" font-weight="bold" font-size="10" fill="#2e3c3c" textLength="6.6" lengthAdjust="spacingAndGlyphs">e</text>
<path d="M7.2 1.2H14.2V3.1L10.4 6.5H14.2V8.4H7V6.5L10.8 3.1H7.2z" fill="#364545"/>
<path d="M5 11.8l5.5-6.5" stroke="#fff" stroke-width="3" opacity=".6"/>
<path d="M5 11.8l5.5-6.5" stroke="#2e8a3c" stroke-width="1.7"/>
<rect x="10" y="10.8" width="4" height="1.8" fill="#2a7a3a"/></svg>
<div class="t" style="left:986.5px;top:87.9px;font-size:12px;line-height:15px;color:#141c28;transform:scaleX(1.0060);">Acme03/ACME [1]</div>
<div class="a" style="left:1328px;top:86px;width:31px;height:17px;background:linear-gradient(#d6e3f2 0%,#c6d7ec 45%,#acc0da 55%,#bed1e8 100%);border:1px solid #6a7a90;border-radius:2px;box-shadow:inset 0 0 0 1px rgba(255,255,255,.4)"></div>
<div class="a" style="left:1338px;top:95px;width:10px;height:4px;background:#fff;border:1px solid #2a2a2a"></div>
<div class="a" style="left:1361px;top:86px;width:31px;height:17px;background:linear-gradient(#d6e3f2 0%,#c6d7ec 45%,#acc0da 55%,#bed1e8 100%);border:1px solid #6a7a90;border-radius:2px;box-shadow:inset 0 0 0 1px rgba(255,255,255,.4)"></div>
<div class="a" style="left:1371px;top:90px;width:10px;height:8px;background:#fff;border:1px solid #2a2a2a"></div>
<div class="a" style="left:1374px;top:93px;width:4px;height:3px;background:#fff;border:1px solid #2a2a2a"></div>
<div class="a" style="left:1393px;top:86px;width:31px;height:17px;background:linear-gradient(#efb6aa 0%,#e8a494 42%,#cc4630 52%,#d4604a 80%,#e6988a 100%);border:1px solid #3c1c18;border-radius:2px;box-shadow:inset 0 0 0 1px rgba(255,255,255,.4)"></div>
<svg class="a" style="left:1402px;top:89px;" width="12" height="10" viewBox="0 0 12 10"><path d="M3 2l6 6M9 2l-6 6" stroke="#2a2a2a" stroke-width="3.8" stroke-linecap="square"/><path d="M3 2l6 6M9 2l-6 6" stroke="#fff" stroke-width="1.9" stroke-linecap="square"/></svg>
<div class="a" style="left:965px;top:106px;width:461px;height:357px;background:#d3d3d3"></div>
<div class="a" style="left:965px;top:416px;width:1px;height:43px;"></div>
<svg class="a" style="left:970px;top:109px;" width="16" height="16" viewBox="0 0 16 16"><polyline points="1.5,2.6 2.5,0.8 3.5,2.6 4.5,0.8 5.5,2.6 6.5,0.8 7.5,2.6 8.5,0.8 9.5,2.6 10.5,0.8 11.5,2.6" stroke="#222" stroke-width=".9" fill="none"/><rect x="12" y="2" width="1" height="3" fill="#222"/><rect x=".75" y="4.75" width="14.5" height="10.5" rx="1.3" fill="#f8f000" stroke="#000" stroke-width="1.5"/><g fill="#c8c000" opacity=".7"><rect x="3" y="7" width="1" height="1"/><rect x="12" y="7" width="1" height="1"/><rect x="3" y="12" width="1" height="1"/><rect x="12" y="12" width="1" height="1"/></g><path d="M2.5 6l11 8M13.5 6l-11 8" stroke="#a81010" stroke-width="2.2"/></svg>
<div class="a" style="left:992px;top:110px;width:1px;height:16px;background:#9a9a9a;box-shadow:1px 0 0 #fff"></div>
<svg class="a" style="left:1000px;top:110px;" width="14" height="15" viewBox="0 0 14 15"><defs><linearGradient id="pz" x1="0" y1="0" x2="1" y2="0"><stop offset="0" stop-color="#ffb080"/><stop offset=".15" stop-color="#7a0000"/><stop offset="1" stop-color="#5a0000"/></linearGradient></defs><rect x=".5" y="0" width="4.5" height="15" fill="url(#pz)"/><rect x="8.5" y="0" width="4.5" height="15" fill="url(#pz)"/></svg>
<svg class="a" style="left:1023px;top:110px;" width="15" height="15" viewBox="0 0 15 15"><defs><linearGradient id="st" x1="0" y1="0" x2="0" y2="1"><stop offset="0" stop-color="#ff0a0a"/><stop offset=".5" stop-color="#c80000"/><stop offset="1" stop-color="#800000"/></linearGradient></defs><rect x=".5" y=".5" width="13.5" height="14" fill="url(#st)"/><rect x="12" y="0" width="2.5" height="15" fill="#6a0000"/></svg>
<svg class="a" style="left:1047px;top:110px;" width="11" height="15" viewBox="0 0 11 15"><path d="M.5 .5L10.5 7.5L.5 14.5z" fill="#97a4bc"/><path d="M.5 .5L10.5 7.5L.5 7.5z" fill="#b0bcd0"/></svg>
<div class="a" style="left:1067px;top:110px;width:1px;height:16px;background:#9a9a9a;box-shadow:1px 0 0 #fff"></div>
<svg class="a" style="left:1075px;top:110px;" width="15" height="15" viewBox="0 0 15 15"><defs><linearGradient id="fl" x1="0" y1="0" x2="1" y2="0"><stop offset="0" stop-color="#707070"/><stop offset=".5" stop-color="#e8e8e8"/><stop offset="1" stop-color="#202030"/></linearGradient></defs><path d="M.5 .8H14.5L9.5 6.8V14.5H5.5V6.8z" fill="url(#fl)" stroke="#1a1a1a" stroke-width="1.1"/><path d="M3.2 2H10.5L8.2 5H6z" fill="#fff"/><rect x="6.2" y="9" width="2.8" height="4.8" fill="#505a40"/></svg>
<svg class="a" style="left:1096px;top:115px;" width="6" height="4" viewBox="0 0 6 4"><path d="M0 0H6L3 4z" fill="#111"/></svg>
<svg class="a" style="left:1108px;top:110px;" width="17" height="15" viewBox="0 0 17 15"><rect x="0" y="1" width="10" height="3.5" fill="#555"/><rect x="0" y="5.5" width="10" height="3.5" fill="#555"/><rect x="0" y="10" width="10" height="3.5" fill="#555"/><rect x="1.5" y="2" width="2" height="1.5" fill="#ddd"/><rect x="1.5" y="6.5" width="2" height="1.5" fill="#ddd"/><rect x="1.5" y="11" width="2" height="1.5" fill="#ddd"/><circle cx="11.5" cy="8.5" r="4.2" fill="#d8d850" stroke="#444" stroke-width="1.2" stroke-dasharray="1.6 1"/><circle cx="11.5" cy="8.5" r="1.5" fill="#555"/></svg>
<svg class="a" style="left:1131px;top:110px;" width="16" height="15" viewBox="0 0 16 15"><rect x=".5" y=".5" width="15" height="14" fill="#2a2a2a" stroke="#e8e8f4"/><path d="M1.5 8H4L5.5 3L7.5 12L9.5 5.5L11 9H14.5" stroke="#c8f0c0" stroke-width="1" fill="none"/></svg>
<div class="a" style="left:965px;top:132px;width:461px;height:1px;background:#5c5c5c"></div>
<div class="a" style="left:965px;top:133px;width:461px;height:1px;background:#a8a8a8"></div>
<div class="a" style="left:965px;top:132px;width:2px;height:331px;background:#5c5c5c"></div>
<div class="a" style="left:967px;top:134px;width:1px;height:274px;background:#e4e4e4"></div>
<div class="a" style="left:968px;top:135px;width:1px;height:273px;background:#b4c2d6"></div>
<div class="a" style="left:968px;top:134px;width:455px;height:1px;background:#b4c2d6"></div>
<div class="a" style="left:1422px;top:135px;width:1px;height:255px;background:#b4c2d6"></div>
<div class="a" style="left:1423px;top:134px;width:3px;height:329px;background:linear-gradient(90deg,#dcd8d8,#f8f8f8 40%,#fdfdfd)"></div>
<div class="a" style="left:965px;top:463px;width:461px;height:1px;background:#f0f0f0"></div>
<div class="a" style="left:969px;top:135px;width:453px;height:254px;background:#000;overflow:hidden">
<div class="t" style="left:1.0px;top:1.8px;font-size:12px;line-height:15px;color:#fffff0;transform:scaleX(0.8955);">*** OPENING SERVER BRIDGE ***</div>
<div class="t" style="left:1.0px;top:16.8px;font-size:12px;line-height:15px;color:#fffff0;transform:scaleX(0.8837);">*** SERVER BRIDGE OPENED ***</div>
<div class="t" style="left:1.0px;top:31.8px;font-size:12px;line-height:15px;color:#fffff0;transform:scaleX(0.9300);">***  LOADING BACKDATED EVENTS (LAST 1 MINUTES)  ***</div>
<div class="t" style="left:1.0px;top:46.8px;font-size:12px;line-height:15px;color:#fffff0;transform:scaleX(0.9690);">05/18/2017 04:14:48 PM  Error connecting to server Acme03/ACME: The remote server is not a known TCP/IP host</div>
<div class="t" style="left:1.0px;top:76.8px;font-size:12px;line-height:15px;color:#fffff0;transform:scaleX(0.9569);">05/18/2017 04:15:06 PM  Opened session for John Admin/ACME (Release 9.0.1)</div>
</div>
<div class="a" style="left:968px;top:389px;width:455px;height:18px;background:#ececec;border-bottom:1px solid #8ea6c6"></div>
<svg class="a" style="left:975px;top:394px;" width="5" height="7" viewBox="0 0 5 7"><path d="M4.5 0V7L0 3.5z" fill="#404040"/></svg>
<svg class="a" style="left:1411px;top:394px;" width="5" height="7" viewBox="0 0 5 7"><path d="M.5 0V7L5 3.5z" fill="#404040"/></svg>
<div class="a" style="left:987px;top:390px;width:312px;height:14px;background:linear-gradient(#f6f6f6 0%,#ececec 45%,#dcdcdc 55%,#cfcfcf 100%);border:1px solid #979797;border-radius:2px"></div>
<div class="a" style="left:1141px;top:394px;width:1px;height:6px;background:#5a5a5a;box-shadow:1px 0 0 #fafafa"></div>
<div class="a" style="left:1143px;top:394px;width:1px;height:6px;background:#5a5a5a;box-shadow:1px 0 0 #fafafa"></div>
<div class="a" style="left:1145px;top:394px;width:1px;height:6px;background:#5a5a5a;box-shadow:1px 0 0 #fafafa"></div>
<div class="t" style="left:971.4px;top:417.3px;font-size:12px;line-height:15px;color:#14143c;transform:scaleX(1.0283);">Domino Command:</div>
<div class="a" style="left:1100px;top:413px;width:318px;height:20px;background:#fff;border:1px solid #abb8cc;border-top-color:#9aa8bc"></div>
<div class="a" style="left:1404px;top:414px;width:13px;height:18px;background:linear-gradient(90deg,#b6c4dd,#c2cee4)"></div>
<svg class="a" style="left:1407px;top:421px;" width="7" height="4" viewBox="0 0 7 4"><path d="M0 0H7L3.5 4z" fill="#fff"/></svg>
<div class="a" style="left:1100px;top:437px;width:203px;height:22px;background:linear-gradient(#fdfdfe 0%,#f2f3f6 45%,#dde1ea 55%,#d6dbe6 100%);border:1px solid #a8acb4;border-radius:2px;box-shadow:inset 0 0 0 1px rgba(255,255,255,.8)"></div>
<div class="t" style="left:1146.8px;top:441.1px;font-size:12px;line-height:15px;color:#101010;transform:scaleX(1.0224);">Command History...</div>
<div class="a" style="left:1307px;top:437px;width:112px;height:22px;background:linear-gradient(#f0f0f0 0%,#e6e6e6 45%,#d6d6d6 55%,#d2d2d2 100%);border:1px solid #bdbdbd;border-radius:2px;box-shadow:inset 0 0 0 1px rgba(255,255,255,.55)"></div>
<div class="t" style="left:1349.3px;top:441.1px;font-size:12px;line-height:15px;color:#9c9c9c;transform:scaleX(0.9275);">Send</div>
<div class="a" style="left:1351px;top:453px;width:7px;height:1px;background:#9c9c9c"></div>
<svg class="a" style="left:1411px;top:451px;" width="13" height="12" viewBox="0 0 13 12"><path d="M2 11L12 1M6 11L12 5M10 11L12 9" stroke="#5a5a5a" stroke-width="1.2"/></svg>
<div class="a" style="left:1434px;top:75px;width:3px;height:400px;background:#d0d0d0"></div>
<div class="a" style="left:1436px;top:2px;width:1px;height:724px;background:#fafafa"></div>
<div class="a" style="left:0px;top:473px;width:1437px;height:2px;background:#f2f2f2"></div>
<div class="a" style="left:0px;top:475px;width:1437px;height:3px;background:#d4d4d4"></div>
<div class="a" style="left:0px;top:478px;width:1436px;height:20px;background:linear-gradient(#f2f2f2 0%,#e8e8e8 35%,#d4d4d4 75%,#bfbfbf 100%)"></div>
<div class="a" style="left:0px;top:478px;width:1px;height:20px;background:#c0c0c0"></div>
<div class="a" style="left:0px;top:498px;width:1437px;height:228px;background:#fff"></div>
<div class="a" style="left:0px;top:498px;width:1px;height:228px;background:#c8c8c8"></div>
<div class="t" style="left:2.0px;top:499.9px;font-size:12px;line-height:15px;color:#000;transform:scaleX(0.9728);">[5/18/2017 4:11:00 PM]</div>
<div class="t" style="left:125.0px;top:499.9px;font-size:12px;line-height:15px;color:#000;letter-spacing:1px">----------------------</div>
<div class="t" style="left:237.0px;top:499.9px;font-size:12px;line-height:15px;color:#000;transform:scaleX(0.9820);">Started console &#x27;Acme01/ACME [1]&#x27;</div>
<div class="t" style="left:429.5px;top:499.9px;font-size:12px;line-height:15px;color:#000;letter-spacing:1px">----------------------</div>
<div class="t" style="left:2.0px;top:514.9px;font-size:12px;line-height:15px;color:#000;transform:scaleX(0.9728);">[5/18/2017 4:11:00 PM]</div>
<div class="t" style="left:125.0px;top:514.9px;font-size:12px;line-height:15px;color:#000;letter-spacing:1px">----------------------</div>
<div class="t" style="left:237.0px;top:514.9px;font-size:12px;line-height:15px;color:#000;transform:scaleX(0.9820);">Started console &#x27;Acme02/ACME [1]&#x27;</div>
<div class="t" style="left:429.5px;top:514.9px;font-size:12px;line-height:15px;color:#000;letter-spacing:1px">----------------------</div>
<div class="t" style="left:2.0px;top:529.9px;font-size:12px;line-height:15px;color:#000;transform:scaleX(0.9728);">[5/18/2017 4:11:00 PM]</div>
<div class="t" style="left:125.0px;top:529.9px;font-size:12px;line-height:15px;color:#000;letter-spacing:1px">----------------------</div>
<div class="t" style="left:237.0px;top:529.9px;font-size:12px;line-height:15px;color:#000;transform:scaleX(0.9820);">Started console &#x27;Acme03/ACME [1]&#x27;</div>
<div class="t" style="left:429.5px;top:529.9px;font-size:12px;line-height:15px;color:#000;letter-spacing:1px">----------------------</div>
<div class="t" style="left:2.0px;top:544.9px;font-size:12px;line-height:15px;color:#000;transform:scaleX(0.9728);">[5/18/2017 4:11:01 PM]</div>
<div class="t" style="left:125.0px;top:544.9px;font-size:12px;line-height:15px;color:#000;letter-spacing:1px">----------------------</div>
<div class="t" style="left:237.0px;top:544.9px;font-size:12px;line-height:15px;color:#000;transform:scaleX(0.9786);">Opened server bridge &#x27;Acme03/ACME&#x27;</div>
<div class="t" style="left:444.5px;top:544.9px;font-size:12px;line-height:15px;color:#000;letter-spacing:1px">----------------------</div>
<div class="t" style="left:2.0px;top:559.9px;font-size:12px;line-height:15px;color:#000;transform:scaleX(0.9864);">[5/18/2017 4:11:01 PM] [Acme03/ACME] Loading backdated events (previous 1 minutes)</div>
<div class="t" style="left:2.0px;top:574.9px;font-size:12px;line-height:15px;color:#000;transform:scaleX(0.9867);">[5/18/2017 4:11:01 PM] [Acme03/ACME] Loaded 1 backdated events from the previous 1 minutes</div>
<div class="t" style="left:2.0px;top:589.9px;font-size:12px;line-height:15px;color:#000;transform:scaleX(0.9728);">[5/18/2017 4:11:01 PM]</div>
<div class="t" style="left:125.0px;top:589.9px;font-size:12px;line-height:15px;color:#000;letter-spacing:1px">----------------------</div>
<div class="t" style="left:237.0px;top:589.9px;font-size:12px;line-height:15px;color:#000;transform:scaleX(0.9786);">Opened server bridge &#x27;Acme01/ACME&#x27;</div>
<div class="t" style="left:444.5px;top:589.9px;font-size:12px;line-height:15px;color:#000;letter-spacing:1px">----------------------</div>
<div class="t" style="left:2.0px;top:604.9px;font-size:12px;line-height:15px;color:#000;transform:scaleX(0.9864);">[5/18/2017 4:11:01 PM] [Acme01/ACME] Loading backdated events (previous 1 minutes)</div>
<div class="t" style="left:2.0px;top:619.9px;font-size:12px;line-height:15px;color:#000;transform:scaleX(0.9867);">[5/18/2017 4:11:01 PM] [Acme01/ACME] Loaded 2 backdated events from the previous 1 minutes</div>
<div class="t" style="left:2.0px;top:634.9px;font-size:12px;line-height:15px;color:#000;transform:scaleX(0.9728);">[5/18/2017 4:11:02 PM]</div>
<div class="t" style="left:125.0px;top:634.9px;font-size:12px;line-height:15px;color:#000;letter-spacing:1px">----------------------</div>
<div class="t" style="left:237.0px;top:634.9px;font-size:12px;line-height:15px;color:#000;transform:scaleX(0.9786);">Opened server bridge &#x27;Acme02/ACME&#x27;</div>
<div class="t" style="left:444.5px;top:634.9px;font-size:12px;line-height:15px;color:#000;letter-spacing:1px">----------------------</div>
<div class="t" style="left:2.0px;top:649.9px;font-size:12px;line-height:15px;color:#000;transform:scaleX(0.9864);">[5/18/2017 4:11:02 PM] [Acme02/ACME] Loading backdated events (previous 1 minutes)</div>
<div class="t" style="left:2.0px;top:664.9px;font-size:12px;line-height:15px;color:#000;transform:scaleX(0.9867);">[5/18/2017 4:11:04 PM] [Acme02/ACME] Loaded 3 backdated events from the previous 1 minutes</div>
<div class="a" style="left:0px;top:725px;width:1437px;height:1px;background:#6a6a6a"></div>
<div class="a" style="left:0px;top:726px;width:1437px;height:20px;background:linear-gradient(#eef2f8 0%,#dce2ec 15%,#d0d6e2 45%,#bcc4d4 75%,#abb5c9 100%)"></div>
<div class="a" style="left:0px;top:745px;width:1437px;height:1px;background:#2c3440"></div>
<div class="a" style="left:1229px;top:727px;width:1px;height:18px;background:#a0a8b8;box-shadow:1px 0 0 #f4f6fa"></div>
<div class="a" style="left:1233px;top:728px;width:202px;height:16px;background:linear-gradient(#fafbfd 0%,#eef0f4 50%,#dcdfe6 100%);border:1px solid #b0b6c4;border-radius:2px"></div>
<div class="t" style="left:1284.5px;top:729.5px;font-size:12px;line-height:15px;color:#101010;transform:scaleX(1.0045);">Hide Output Panel</div>
</body></html>
